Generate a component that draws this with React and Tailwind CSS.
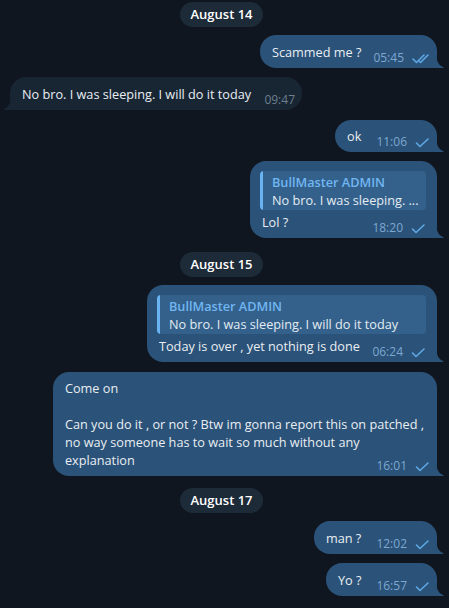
import React from 'react';

const font = { fontFamily: '"Open Sans", "Noto Sans", sans-serif' };

function Check({ double }) {
  if (double) {
    return (
      <svg width="18" height="11" viewBox="0 0 18 11" fill="none" className="shrink-0">
        <path d="M1 6 L4.5 9.5 L12 2" stroke="#5ea8e6" strokeWidth="1.6" strokeLinecap="round" strokeLinejoin="round" />
        <path d="M7.5 8.5 L8.5 9.5 L16 2" stroke="#5ea8e6" strokeWidth="1.6" strokeLinecap="round" strokeLinejoin="round" />
      </svg>
    );
  }
  return (
    <svg width="15" height="11" viewBox="0 0 15 11" fill="none" className="shrink-0">
      <path d="M1.5 6 L5 9.5 L13 2" stroke="#5ea8e6" strokeWidth="1.6" strokeLinecap="round" strokeLinejoin="round" />
    </svg>
  );
}

function Meta({ time, out, double }) {
  return (
    <div className="flex items-center gap-[8px] mb-[-5px] shrink-0 leading-[16px]">
      <span className={`text-[12px] ${out ? 'text-[#7da8d2]' : 'text-[#6d7f8f]'}`}>{time}</span>
      {out && <Check double={double} />}
    </div>
  );
}

function Tail({ out }) {
  if (out) {
    return (
      <svg width="8" height="12" viewBox="0 0 8 12" className="absolute bottom-0 left-full -ml-px">
        <path d="M0 0 C1 6 3.5 10 7.5 11.2 Q8 12 7 12 L0 12 Z" fill="#2b5278" />
      </svg>
    );
  }
  return (
    <svg width="8" height="12" viewBox="0 0 8 12" className="absolute bottom-0 right-full -mr-px">
      <path d="M8 0 C7 6 4.5 10 0.5 11.2 Q0 12 1 12 L8 12 Z" fill="#182533" />
    </svg>
  );
}

function Quote({ text }) {
  return (
    <div className="flex rounded-[4px] bg-[#33618b] overflow-hidden mb-[3px]">
      <div className="w-[3px] bg-[#6ab3f3] shrink-0" />
      <div className="pl-[9px] pr-2 pt-[2px] pb-[1px]">
        <div className="font-semibold text-[#71b6f2] whitespace-nowrap leading-[18px]">BullMaster ADMIN</div>
        <div className="text-[#e4ebf2] whitespace-nowrap leading-[18px]">{text}</div>
      </div>
    </div>
  );
}

function Bubble({ out, width, time, double, quote, body, children, pt = 'pt-[8px]' }) {
  return (
    <div className={`flex ${out ? 'justify-end' : 'justify-start'}`}>
      <div
        className={`relative ${out ? 'bg-[#2b5278] rounded-[16px] rounded-br-none' : 'bg-[#182533] rounded-[16px] rounded-bl-none'} ${quote ? 'pt-[10px] pl-[10px] pr-[11px]' : `${pt} pl-3 pr-[7px]`} pb-[7px]`}
        style={{ width }}
      >
        {quote && <Quote text={quote} />}
        {body && <div className="leading-[18px] text-[#e9eef3] whitespace-nowrap">{body}</div>}
        <div className={`flex items-end justify-between gap-2 ${quote ? 'pl-[2px]' : ''}`}>
          <div className="leading-[18px] text-[#e9eef3] whitespace-nowrap">{children}</div>
          <Meta time={time} out={out} double={double} />
        </div>
        <Tail out={out} />
      </div>
    </div>
  );
}

function DatePill({ children }) {
  return (
    <div className="flex justify-center pr-[4px]">
      <div className="h-[25px] w-[83px] rounded-full bg-[#1d2a38] flex items-center justify-center font-semibold text-[13px] text-white">
        {children}
      </div>
    </div>
  );
}

export default function App() {
  return (
    <div className="w-[449px] h-[608px] overflow-hidden bg-[#0f1620] text-[12.7px] pt-[2px] pl-[10px] pr-[12px]" style={font}>
      <DatePill>August 14</DatePill>
      <div className="mt-[8px]">
        <Bubble out width={177} time="05:45" double>Scammed me ?</Bubble>
      </div>
      <div className="mt-[9px]">
        <Bubble width={292} time="09:47">No bro. I was sleeping. I will do it today</Bubble>
      </div>
      <div className="mt-[10px]">
        <Bubble out width={102} time="11:06" pt="pt-[7px]">ok</Bubble>
      </div>
      <div className="mt-[9px]">
        <Bubble out width={187} time="18:20" quote="No bro. I was sleeping. ...">Lol ?</Bubble>
      </div>
      <div className="mt-[14px]">
        <DatePill>August 15</DatePill>
      </div>
      <div className="mt-[8px]">
        <Bubble out width={290} time="06:24" quote="No bro. I was sleeping. I will do it today">
          Today is over , yet nothing is done
        </Bubble>
      </div>
      <div className="mt-[10px]">
        <Bubble
          out
          width={384}
          time="16:01"
          pt="pt-[7px]"
          body={
            <>
              Come on
              <br />
              <br />
              Can you do it , or not ? Btw im gonna report this on patched ,
              <br />
              no way someone has to wait so much without any
            </>
          }
        >
          explanation
        </Bubble>
      </div>
      <div className="mt-[12px]">
        <DatePill>August 17</DatePill>
      </div>
      <div className="mt-[8px]">
        <Bubble out width={123} time="12:02">man ?</Bubble>
      </div>
      <div className="mt-[9px]">
        <Bubble out width={111} time="16:57">Yo ?</Bubble>
      </div>
    </div>
  );
}
